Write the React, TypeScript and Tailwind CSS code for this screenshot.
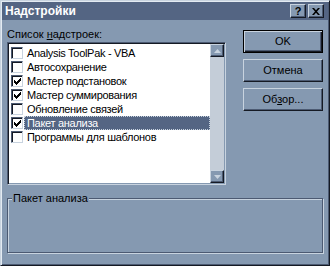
import React from "react";

const items = [
  { label: "Analysis ToolPak - VBA", checked: false },
  { label: "Автосохранение", checked: false },
  { label: "Мастер подстановок", checked: true },
  { label: "Мастер суммирования", checked: true },
  { label: "Обновление связей", checked: false },
  { label: "Пакет анализа", checked: true, selected: true },
  { label: "Программы для шаблонов", checked: false },
];

const raised =
  "border border-t-[#c8d3df] border-l-[#c8d3df] border-r-[#151a24] border-b-[#151a24] shadow-[inset_-1px_-1px_0_#4c5a72]";

const CheckBox = ({ checked }: { checked: boolean }) => (
  <span className="w-[12px] h-[12px] shrink-0 bg-white border border-t-[#4c5a72] border-l-[#4c5a72] border-r-[#c8d3df] border-b-[#c8d3df] shadow-[inset_1px_1px_0_#151a24] flex items-center justify-center">
    {checked ? (
      <svg width="7" height="7" viewBox="0 0 7 7" className="mt-[1px] ml-[1px]">
        <path d="M0 2h1v1h1v1h1v-1h1v-1h1v-1h1v-1h1v3h-1v1h-1v1h-1v1h-1v1h-1v-1h-1v-1h-1v-1h-1z" fill="#000" />
      </svg>
    ) : null}
  </span>
);

const Arrow = ({ up }: { up: boolean }) => (
  <svg width="7" height="4" viewBox="0 0 7 4">
    <path d={up ? "M3.5 0L7 4H0z" : "M0 0h7L3.5 4z"} fill="#c8d3df" />
  </svg>
);

const ScrollButton = ({ up }: { up: boolean }) => (
  <div className={`w-[14px] h-[13px] bg-[#8599b1] flex items-center justify-center ${raised}`}>
    <Arrow up={up} />
  </div>
);

const Button = ({ children, isDefault = false }: { children: React.ReactNode; isDefault?: boolean }) => (
  <button
    type="button"
    className={`w-[80px] h-[23px] bg-[#8599b1] text-black text-[11px] flex items-center justify-center ${
      isDefault
        ? "border border-black shadow-[inset_1px_1px_0_#c8d3df,inset_-1px_-1px_0_#151a24,inset_-2px_-2px_0_#4c5a72]"
        : raised
    }`}
  >
    {children}
  </button>
);

export default function App() {
  return (
    <div
      className="w-[330px] h-[266px] bg-[#8599b1] p-[1px] border border-t-[#c8d3df] border-l-[#c8d3df] border-r-[#151a24] border-b-[#151a24] shadow-[inset_1px_1px_0_#e4ebf2,inset_-1px_-1px_0_#4c5a72] text-black select-none"
      style={{ fontFamily: '"Liberation Sans", Arial, sans-serif' }}
    >
      {/* Title bar */}
      <div className="h-[18px] bg-[#546583] flex items-center pl-[3px] pr-[4px]">
        <span className="text-white font-bold text-[12px] leading-none">Надстройки</span>
        <div className="ml-auto flex items-center gap-[2px]">
          <div className={`w-[16px] h-[14px] bg-[#8599b1] flex items-center justify-center text-[11px] font-bold leading-none ${raised}`}>?</div>
          <div className={`w-[16px] h-[14px] bg-[#8599b1] flex items-center justify-center ${raised}`}>
            <svg width="8" height="7" viewBox="0 0 8 7">
              <path d="M0 0h2l2 2.2L6 0h2L5 3.5 8 7H6L4 4.8 2 7H0l3-3.5z" fill="#000" />
            </svg>
          </div>
        </div>
      </div>

      {/* Body */}
      <div className="px-[5px] pt-[7px] text-[11px]">
        <div className="flex">
          <div className="w-[219px] flex flex-col">
            <span className="leading-[14px] h-[14px]">
              Список <span className="underline">н</span>адстроек:
            </span>
            <div className="mt-[1px] h-[143px] flex bg-white border border-t-[#4c5a72] border-l-[#4c5a72] border-r-[#c8d3df] border-b-[#c8d3df] shadow-[inset_1px_1px_0_#151a24,inset_-1px_-1px_0_#8599b1] p-[1px]">
              <div className="flex-1 flex flex-col pt-[2px] min-w-0">
                {items.map((it) => (
                  <div key={it.label} className="h-[14px] flex items-center pl-[2px]">
                    <CheckBox checked={it.checked} />
                    <span
                      className={`ml-[1px] flex-1 h-[14px] px-[2px] leading-[12px] tracking-[-0.3px] whitespace-nowrap border ${
                        it.selected
                          ? "bg-[#546583] text-white border-dotted border-[#c8d3df]"
                          : "border-transparent"
                      }`}
                    >
                      {it.label}
                    </span>
                  </div>
                ))}
              </div>
              <div className="w-[14px] bg-[#c4cdd8] flex flex-col justify-between">
                <ScrollButton up />
                <ScrollButton up={false} />
              </div>
            </div>
          </div>

          <div className="ml-auto mt-[3px] flex flex-col gap-[6px]">
            <Button isDefault>OK</Button>
            <Button>Отмена</Button>
            <Button>
              <span>
                Об<span className="underline">з</span>ор...
              </span>
            </Button>
          </div>
        </div>

        {/* Description group */}
        <div className="relative mt-[13px] h-[55px] border border-[#4c5a72] shadow-[inset_1px_1px_0_#c8d3df,1px_1px_0_#c8d3df]">
          <span className="absolute -top-[8px] left-[4px] px-[1px] bg-[#8599b1] leading-[14px]">
            Пакет анализа
          </span>
        </div>
      </div>
    </div>
  );
}
